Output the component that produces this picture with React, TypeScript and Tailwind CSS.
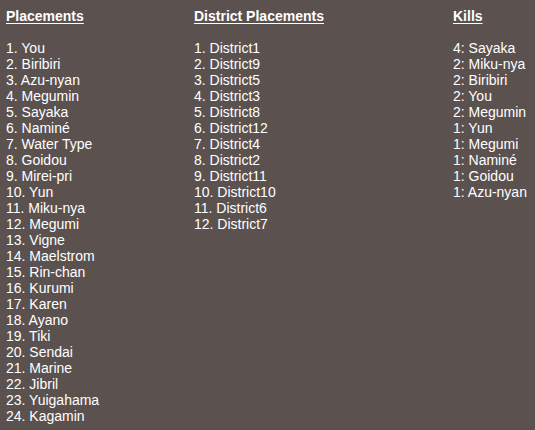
const placements = [
  "You", "Biribiri", "Azu-nyan", "Megumin", "Sayaka", "Naminé", "Water Type", "Goidou",
  "Mirei-pri", "Yun", "Miku-nya", "Megumi", "Vigne", "Maelstrom", "Rin-chan", "Kurumi",
  "Karen", "Ayano", "Tiki", "Sendai", "Marine", "Jibril", "Yuigahama", "Kagamin",
];

const districts = [
  "District1", "District9", "District5", "District3", "District8", "District12",
  "District4", "District2", "District11", "District10", "District6", "District7",
];

const kills: [number, string][] = [
  [4, "Sayaka"], [2, "Miku-nya"], [2, "Biribiri"], [2, "You"], [2, "Megumin"],
  [1, "Yun"], [1, "Megumi"], [1, "Naminé"], [1, "Goidou"], [1, "Azu-nyan"],
];

function Column({ title, lines, className }: { title: string; lines: string[]; className: string }) {
  return (
    <div className={className}>
      <p className="font-bold underline underline-offset-2">{title}</p>
      <p>&nbsp;</p>
      {lines.map((line) => (
        <p key={line} className="whitespace-nowrap">{line}</p>
      ))}
    </div>
  );
}

export default function App() {
  return (
    <div
      className="flex min-h-[430px] w-[535px] bg-[#5b5250] pl-[6px] pt-[8px] text-[14px] leading-[16px] text-white"
      style={{ fontFamily: '"Liberation Sans", Arial, sans-serif' }}
    >
      <Column
        title="Placements"
        className="w-[188px] shrink-0"
        lines={placements.map((name, i) => `${i + 1}. ${name}`)}
      />
      <Column
        title="District Placements"
        className="w-[259px] shrink-0"
        lines={districts.map((name, i) => `${i + 1}. ${name}`)}
      />
      <Column
        title="Kills"
        className="shrink-0"
        lines={kills.map(([n, name]) => `${n}: ${name}`)}
      />
    </div>
  );
}
